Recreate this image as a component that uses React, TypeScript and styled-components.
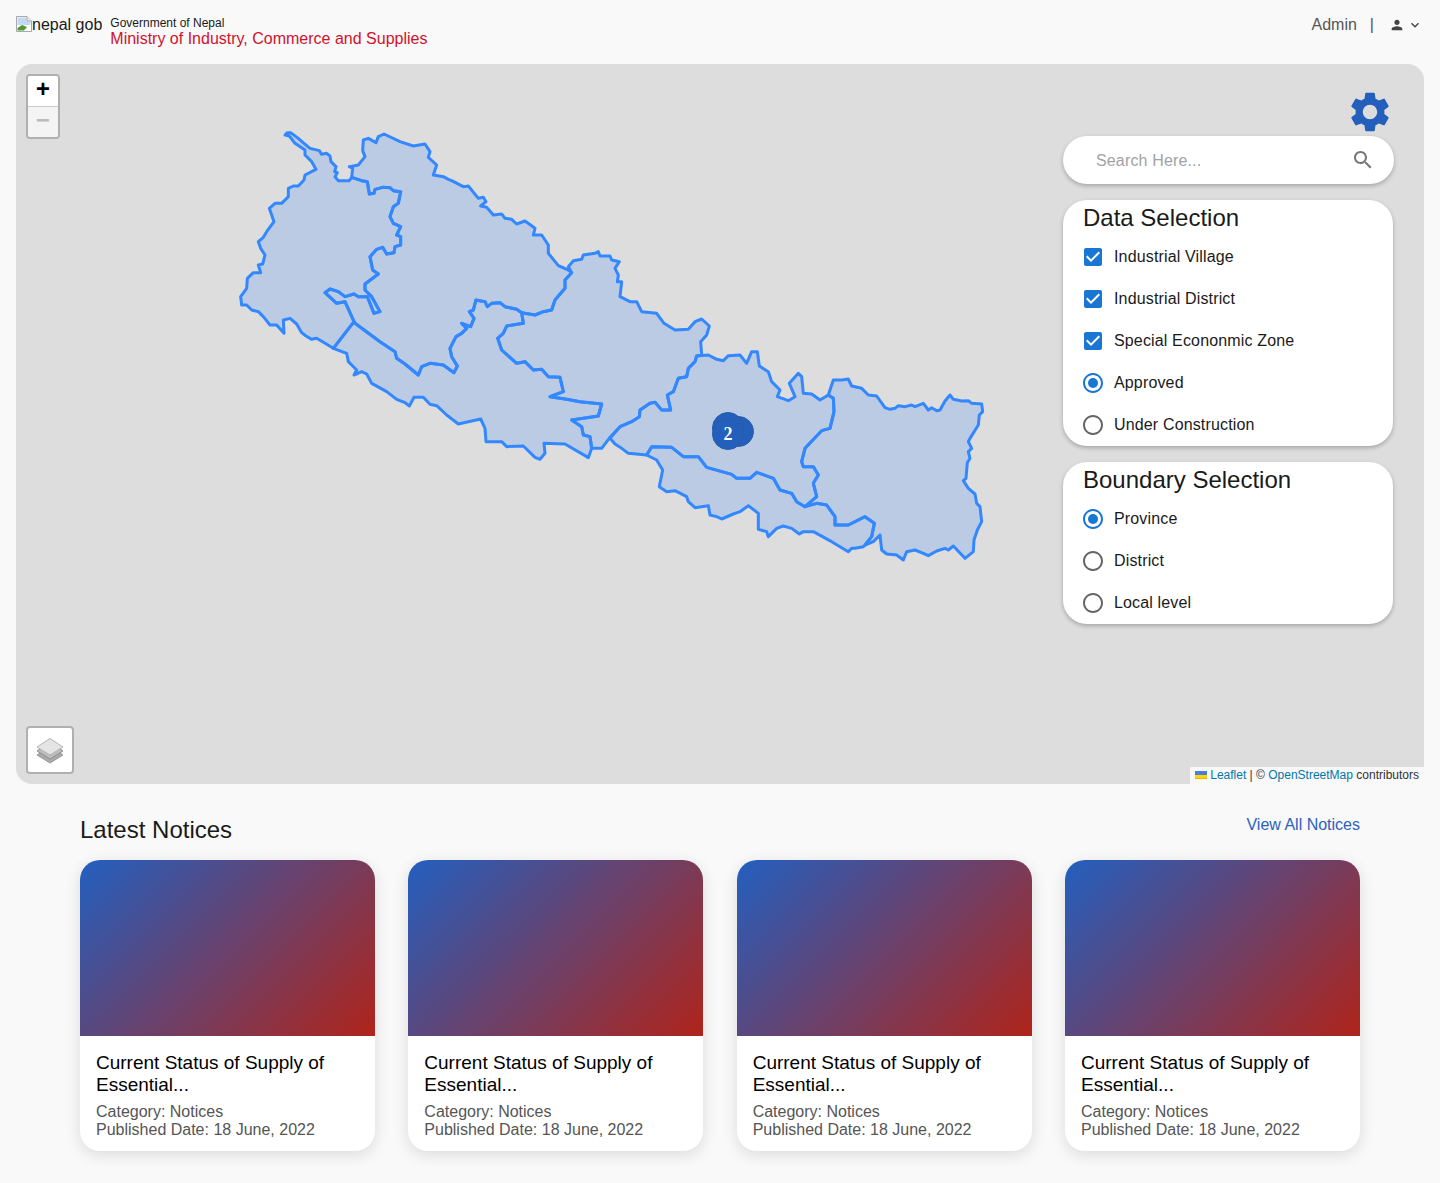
import styled, { createGlobalStyle } from "styled-components";

const GlobalStyle = createGlobalStyle`
  html, body {
    margin: 0;
    background-color: #f9f9f9;
    font-family: "Liberation Sans", Arial, sans-serif;
    color: #1a1a1a;
  }
  * { box-sizing: border-box; }
`;

const Header = styled.header`
  display: flex;
  justify-content: space-between;
  align-items: flex-start;
  height: 64px;
  padding: 16px 16px 0;
`;
const Brand = styled.div`
  display: flex;
  align-items: flex-start;
  gap: 8px;
`;
const BrokenImage = styled.span`
  display: flex;
  font-size: 16px;
  line-height: 18px;
  color: #1a1a1a;
`;
const BrandText = styled.div`
  display: flex;
  flex-direction: column;
`;
const GovText = styled.span`
  font-size: 12px;
  line-height: 14px;
`;
const MinistryText = styled.span`
  font-size: 16px;
  line-height: 18px;
  color: #d0112b;
`;
const UserBox = styled.div`
  display: flex;
  align-items: center;
  height: 18px;
  font-size: 16px;
  color: #555;
`;
const Divider = styled.span`
  margin: 0 15px 0 13px;
`;
const UserIcon = styled.svg`
  width: 16px;
  height: 16px;
  fill: #444;
`;
const ChevronIcon = styled(UserIcon)`
  margin: 0 1px 0 2px;
`;
const MapBox = styled.section`
  position: relative;
  height: 720px;
  margin: 0 16px;
  border-radius: 16px;
  background-color: #ddd;
  overflow: hidden;
`;
const MapShapes = styled.svg`
  position: absolute;
  left: 0;
  top: 0;
  width: 1408px;
  height: 720px;
`;
const Province = styled.polygon`
  fill: #3388ff;
  fill-opacity: 0.2;
  stroke: #3388ff;
  stroke-width: 9;
  stroke-linejoin: round;
`;
const Cluster = styled.div<{ $x: number; $y: number; $size: number }>`
  position: absolute;
  left: ${(p) => p.$x}px;
  top: ${(p) => p.$y}px;
  width: ${(p) => p.$size}px;
  height: ${(p) => p.$size}px;
  display: flex;
  align-items: center;
  justify-content: center;
  border-radius: 50%;
  background-color: #235fbb;
  border: 1px solid #2a5ca8;
  color: #fff;
  font-family: "Liberation Serif", serif;
  font-weight: bold;
  font-size: 18px;
`;
const ZoomControl = styled.div`
  position: absolute;
  left: 10px;
  top: 10px;
  display: flex;
  flex-direction: column;
  border: 2px solid rgba(0, 0, 0, 0.2);
  border-radius: 4px;
  background-clip: padding-box;
`;
const ZoomButton = styled.a<{ $disabled?: boolean }>`
  width: 30px;
  height: ${(p) => (p.$disabled ? "30px" : "31px")};
  padding-bottom: 2px;
  display: flex;
  align-items: center;
  justify-content: center;
  font-family: "Liberation Mono", monospace;
  font-weight: bold;
  font-size: 24px;
  color: ${(p) => (p.$disabled ? "#bbb" : "#000")};
  background-color: ${(p) => (p.$disabled ? "#f4f4f4" : "#fff")};
  border-bottom: ${(p) => (p.$disabled ? "none" : "1px solid #ccc")};
  border-radius: ${(p) => (p.$disabled ? "0 0 2px 2px" : "2px 2px 0 0")};
`;
const LayerControl = styled.div`
  position: absolute;
  left: 10px;
  bottom: 10px;
  width: 48px;
  height: 48px;
  display: flex;
  align-items: center;
  justify-content: center;
  background-color: #fff;
  border: 2px solid rgba(0, 0, 0, 0.2);
  border-radius: 4px;
  background-clip: padding-box;
`;
const Attribution = styled.div`
  position: absolute;
  right: 0;
  bottom: 0;
  display: flex;
  align-items: center;
  gap: 3px;
  height: 17px;
  padding: 0 5px 2px;
  font-size: 12px;
  color: #333;
  background-color: rgba(255, 255, 255, 0.8);
  white-space: pre;
`;
const AttrLink = styled.a`
  color: #0078a8;
`;
const Side = styled.div`
  position: absolute;
  top: 24px;
  right: 30px;
  width: 331px;
  display: flex;
  flex-direction: column;
`;
const GearRow = styled.div`
  display: flex;
  justify-content: flex-end;
  height: 48px;
`;
const SearchPill = styled.div`
  display: flex;
  align-items: center;
  height: 48px;
  padding: 0 19px 0 33px;
  margin-bottom: 16px;
  border-radius: 24px;
  background-color: #fff;
  box-shadow: 0 2px 4px rgba(0, 0, 0, 0.25);
`;
const SearchInput = styled.input`
  flex: 1;
  min-width: 0;
  border: none;
  outline: none;
  background: none;
  padding: 1px 0 0;
  font: 16px "Liberation Sans", Arial, sans-serif;
  letter-spacing: 0.15px;
  &::placeholder {
    color: #a2a2a2;
    opacity: 1;
  }
`;
const Panel = styled.div`
  display: flex;
  flex-direction: column;
  width: 330px;
  margin-bottom: 16px;
  border-radius: 24px;
  background-color: #fff;
  box-shadow: 0 2px 4px rgba(0, 0, 0, 0.25);
`;
const PanelTitle = styled.h2`
  margin: 0;
  padding-left: 20px;
  font-size: 24px;
  font-weight: 400;
  line-height: 36px;
  color: #1a1a1a;
`;
const OptionRow = styled.label`
  display: flex;
  align-items: center;
  height: 42px;
  font-size: 16px;
  letter-spacing: 0.15px;
`;
const OptionIcon = styled.span`
  width: 42px;
  height: 42px;
  margin-left: 9px;
  display: flex;
  align-items: center;
  justify-content: center;
`;
const Notices = styled.section`
  padding: 28px 80px 32px;
`;
const NoticeHead = styled.div`
  display: flex;
  justify-content: space-between;
  align-items: flex-start;
  margin-bottom: 12px;
`;
const NoticeTitle = styled.h2`
  margin: 0;
  font-size: 24px;
  font-weight: 400;
  line-height: 36px;
  color: #1a1a1a;
`;
const ViewAll = styled.a`
  padding-top: 1px;
  font-size: 16px;
  line-height: 24px;
  color: #2a62bf;
`;
const CardGrid = styled.div`
  display: grid;
  grid-template-columns: repeat(4, 295px);
  justify-content: space-between;
`;
const Card = styled.article`
  display: flex;
  flex-direction: column;
  height: 291px;
  border-radius: 20px;
  background-color: #fff;
  overflow: hidden;
  box-shadow: 0 4px 16px rgba(0, 0, 0, 0.12);
`;
const CardImage = styled.div`
  flex: none;
  height: 176px;
  background: linear-gradient(135deg, #235fbf, #b0241a);
`;
const CardBody = styled.div`
  padding: 16px 16px 0;
`;
const CardTitle = styled.h3`
  margin: 0 0 7px;
  font-size: 19px;
  font-weight: 400;
  line-height: 22px;
  color: #000;
`;
const CardMeta = styled.p`
  margin: 0;
  font-size: 16px;
  line-height: 18px;
  color: #555;
`;

const west = [
  "165,45 172,38 182,38 205,55 222,70 240,85 268,92 275,103 290,100 300,108 303,125 318,140 314,155 322,158 315,170 325,182 358,182 365,172 395,182 412,185 418,222 432,220 435,208 458,202 480,203 490,212 512,215 505,250 490,260 480,290 490,310 512,320 500,345 512,350 512,375 495,380 492,398 470,402 458,382 440,388 420,410 428,450 445,462 405,492 405,510 425,530 450,575 432,580 412,530 385,530 372,522 345,530 325,515 300,507 285,518 320,550 345,545 372,605 310,685 285,670 260,655 245,658 228,648 215,638 200,612 180,595 160,600 162,640 140,615 120,615 100,590 85,575 65,570 50,555 35,555 32,530 50,505 52,475 70,458 92,458 85,435 98,432 105,405 92,385 85,365 100,352 110,335 132,305 118,265 135,250 155,250 175,230 175,205 190,198 205,198 222,180 225,165 258,148 245,125 225,105 225,90 195,70 178,48",
  "365,172 368,145 358,140 385,135 405,110 398,92 400,60 415,55 438,68 445,50 462,42 510,65 550,78 585,72 600,95 595,112 620,135 610,165 640,170 655,178 665,182 700,200 715,198 745,235 760,232 768,245 752,258 770,262 790,285 815,282 825,295 845,298 860,312 885,303 915,325 910,345 935,345 955,375 955,400 985,437 1015,450 1025,458 1005,480 1005,505 975,540 965,570 940,575 915,585 875,578 860,568 825,560 810,548 785,550 772,560 765,545 738,540 730,570 718,575 732,595 722,620 695,610 710,625 695,640 678,650 660,685 665,710 682,738 672,758 640,735 600,730 575,740 565,765 525,732 500,715 495,695 450,665 375,610 372,605 345,545 320,550 285,518 300,507 325,515 345,530 372,522 385,530 412,530 432,580 450,575 425,530 405,510 405,492 445,462 428,450 420,410 440,388 458,382 470,402 492,398 495,380 512,375 512,350 500,345 512,320 490,310 480,290 490,260 505,250 512,215 490,212 480,203 458,202 435,208 432,220 418,222 412,185 395,182",
  "310,685 372,605 375,610 450,665 495,695 500,715 525,732 565,765 575,740 600,730 640,735 672,758 682,738 665,710 660,685 678,650 695,640 710,625 695,610 722,620 732,595 718,575 730,570 738,540 765,545 772,560 785,550 810,548 825,560 860,568 875,578 880,610 830,618 820,640 803,655 815,690 860,730 885,725 910,750 935,748 955,770 990,772 1000,815 960,830 1010,838 1050,845 1115,852 1105,888 1025,900 1055,920 1060,945 1080,950 1085,985 1075,1013 1005,972 942,970 945,1000 930,1018 915,1012 880,978 830,980 815,965 768,965 765,925 752,897 685,912 650,885 620,857 600,853 580,832 552,832 538,858 525,848 500,838 470,815 425,790 410,762 395,755 372,765 380,750 355,725 350,700",
  "875,578 915,585 940,575 965,570 975,540 1005,505 1005,480 1025,458 1015,440 1030,422 1055,418 1060,405 1095,400 1105,395 1110,408 1140,408 1145,420 1168,425 1155,445 1165,465 1162,485 1175,485 1170,530 1200,545 1220,545 1235,575 1280,580 1302,610 1335,630 1375,628 1395,605 1415,597 1438,618 1430,645 1412,665 1415,705 1400,708 1395,725 1375,745 1370,770 1345,775 1330,815 1312,825 1322,870 1295,870 1275,847 1260,850 1230,870 1228,890 1205,905 1170,920 1140,952 1115,985 1085,985 1080,950 1060,945 1055,920 1025,900 1105,888 1115,852 1050,845 1010,838 960,830 1000,815 990,772 955,770 935,748 910,750 885,725 860,730 815,690 803,655 820,640 830,618 880,610",
];

const east = [
  "210,595 240,560 275,545 298,530 300,510 330,490 345,487 365,510 392,510 382,465 400,455 415,415 440,410 445,385 465,365 470,348 505,345 530,358 550,362 565,347 600,345 620,370 635,335 652,335 658,378 685,395 695,425 720,450 712,470 745,482 765,470 748,430 775,400 785,410 790,460 815,462 840,480 865,465 880,475 882,515 870,565 845,572 795,625 785,665 790,680 820,680 835,705 820,730 830,770 795,800 770,785 755,760 720,750 700,715 650,697 630,715 590,715 575,703 500,682 475,650 430,650 395,622 335,620 320,645 265,640 245,625 225,612",
  "320,645 335,620 395,622 430,650 475,650 500,682 575,703 590,715 630,715 650,697 700,715 720,750 755,760 770,785 795,800 830,790 860,795 885,830 885,855 925,855 975,830 1003,850 995,890 975,915 970,920 945,925 935,925 925,935 875,905 820,875 790,875 778,882 755,865 730,858 710,865 685,890 680,875 655,868 655,820 625,797 600,815 580,822 545,837 530,830 510,825 505,797 465,803 445,785 440,770 405,752 380,755 358,740 368,690 350,660",
  "880,475 865,465 880,420 905,420 925,417 935,438 965,445 985,465 1010,468 1035,503 1050,508 1065,505 1075,497 1095,500 1115,495 1125,500 1150,490 1165,510 1175,503 1190,512 1200,510 1215,483 1230,465 1240,478 1265,483 1285,482 1295,490 1325,492 1328,515 1318,525 1315,555 1290,595 1285,605 1295,625 1285,635 1290,655 1282,668 1278,715 1270,722 1285,745 1305,762 1310,790 1320,800 1325,845 1312,870 1302,900 1300,935 1275,955 1240,918 1225,930 1215,925 1190,933 1165,947 1150,940 1125,930 1100,935 1090,960 1070,945 1040,942 1025,930 1020,885 1000,905 975,915 995,890 1003,850 975,830 925,855 885,855 885,830 860,795 830,790 795,800 830,770 820,730 835,705 820,680 790,680 785,665 795,625 845,572 870,565 882,515",
];

const checkPath =
  "M19 3H5c-1.11 0-2 .9-2 2v14c0 1.1.89 2 2 2h14c1.11 0 2-.9 2-2V5c0-1.1-.89-2-2-2zm-9 14l-5-5 1.41-1.41L10 14.17l7.59-7.59L19 8l-9 9z";
const ringPath =
  "M12 2C6.48 2 2 6.48 2 12s4.48 10 10 10 10-4.48 10-10S17.52 2 12 2zm0 18c-4.42 0-8-3.58-8-8s3.58-8 8-8 8 3.58 8 8-3.58 8-8 8z";

const Check = () => (
  <OptionIcon>
    <svg width="24" height="24" viewBox="0 0 24 24" fill="#1976d2">
      <path d={checkPath} />
    </svg>
  </OptionIcon>
);

const Radio = ({ on }: { on?: boolean }) => (
  <OptionIcon>
    <svg width="24" height="24" viewBox="0 0 24 24" fill={on ? "#1976d2" : "#666"}>
      <path d={ringPath} />
      {on && <circle cx="12" cy="12" r="5" />}
    </svg>
  </OptionIcon>
);

const App = () => {
  return (
    <>
      <GlobalStyle />
      <Header>
        <Brand>
          <BrokenImage>
            <svg width="16" height="16" viewBox="0 0 16 16">
              <path d="M0.5 0.5H11L15.5 5V15.5H0.5Z" fill="#fff" stroke="#a8a8a8" />
              <path d="M1.5 1.5H10.5V5.5H14.5V9L1.5 9Z" fill="#c5d7f3" />
              <path d="M1.5 14.5V12L6 9L11 11L8 14.5Z" fill="#4f9a34" />
              <path d="M11 0.5V5H15.5" fill="#eee" stroke="#a8a8a8" />
            </svg>
            nepal gob
          </BrokenImage>
          <BrandText>
            <GovText>Government of Nepal</GovText>
            <MinistryText>Ministry of Industry, Commerce and Supplies</MinistryText>
          </BrandText>
        </Brand>
        <UserBox>
          Admin
          <Divider>|</Divider>
          <UserIcon viewBox="0 0 24 24">
            <path d="M12 12c2.21 0 4-1.79 4-4s-1.79-4-4-4-4 1.79-4 4 1.79 4 4 4zm0 2c-2.67 0-8 1.34-8 4v2h16v-2c0-2.66-5.33-4-8-4z" />
          </UserIcon>
          <ChevronIcon viewBox="0 0 24 24">
            <path d="M16.59 8.59 12 13.17 7.41 8.59 6 10l6 6 6-6z" />
          </ChevronIcon>
        </UserBox>
      </Header>

      <MapBox>
        <MapShapes viewBox="-642 -168 4224 2160">
          {west.map((pts) => (
            <Province key={pts.slice(0, 12)} points={pts} />
          ))}
          <g transform="translate(930 360)">
            {east.map((pts) => (
              <Province key={pts.slice(0, 12)} points={pts} />
            ))}
          </g>
        </MapShapes>
        <Cluster $x={707} $y={352} $size={31} />
        <Cluster $x={696} $y={348} $size={32} />
        <Cluster $x={696} $y={354} $size={32}>2</Cluster>

        <ZoomControl>
          <ZoomButton>+</ZoomButton>
          <ZoomButton $disabled>−</ZoomButton>
        </ZoomControl>

        <LayerControl>
          <svg width="28" height="27" viewBox="0 0 28 27">
            <path d="M14 9.5L27 18L14 26L1 18Z" fill="#aaa" stroke="#999" />
            <path d="M14 5.5L27 14L14 22L1 14Z" fill="#bdbdbd" stroke="#8f8f8f" />
            <path d="M14 1.5L27 10L14 18L1 10Z" fill="#e4e4e4" stroke="#b5b5b5" />
          </svg>
        </LayerControl>

        <Attribution>
          <svg width="12" height="8" viewBox="0 0 12 8">
            <path fill="#4C7BE1" d="M0 0h12v4H0z" />
            <path fill="#FFD500" d="M0 4h12v3H0z" />
            <path fill="#E0BC00" d="M0 7h12v1H0z" />
          </svg>
          <span>
            <AttrLink>Leaflet</AttrLink> | © <AttrLink>OpenStreetMap</AttrLink> contributors
          </span>
        </Attribution>

        <Side>
          <GearRow>
            <svg width="48" height="48" viewBox="0 0 24 24" fill="#235fbb">
              <path d="M19.14 12.94c.04-.3.06-.61.06-.94 0-.32-.02-.64-.07-.94l2.03-1.58c.18-.14.23-.41.12-.61l-1.92-3.32c-.12-.22-.37-.29-.59-.22l-2.39.96c-.5-.38-1.03-.7-1.62-.94l-.36-2.54c-.04-.24-.24-.41-.48-.41h-3.84c-.24 0-.43.17-.47.41l-.36 2.54c-.59.24-1.13.57-1.62.94l-2.39-.96c-.22-.08-.47 0-.59.22L2.74 8.87c-.12.21-.08.47.12.61l2.03 1.58c-.05.3-.09.63-.09.94s.02.64.07.94l-2.03 1.58c-.18.14-.23.41-.12.61l1.92 3.32c.12.22.37.29.59.22l2.39-.96c.5.38 1.03.7 1.62.94l.36 2.54c.05.24.24.41.48.41h3.84c.24 0 .44-.17.47-.41l.36-2.54c.59-.24 1.13-.56 1.62-.94l2.39.96c.22.08.47 0 .59-.22l1.92-3.32c.12-.22.07-.47-.12-.61l-2.01-1.58zM12 15.6c-1.98 0-3.6-1.62-3.6-3.6s1.62-3.6 3.6-3.6 3.6 1.62 3.6 3.6-1.62 3.6-3.6 3.6z" />
            </svg>
          </GearRow>
          <SearchPill>
            <SearchInput placeholder="Search Here..." />
            <svg width="24" height="24" viewBox="0 0 24 24" fill="#777">
              <path d="M15.5 14h-.79l-.28-.27C15.41 12.59 16 11.11 16 9.5 16 5.91 13.09 3 9.5 3S3 5.91 3 9.5 5.91 16 9.5 16c1.61 0 3.09-.59 4.23-1.57l.27.28v.79l5 4.99L20.49 19l-4.99-5zm-6 0C7.01 14 5 11.99 5 9.5S7.01 5 9.5 5 14 7.01 14 9.5 11.99 14 9.5 14z" />
            </svg>
          </SearchPill>
          <Panel>
            <PanelTitle>Data Selection</PanelTitle>
            <OptionRow><Check />Industrial Village</OptionRow>
            <OptionRow><Check />Industrial District</OptionRow>
            <OptionRow><Check />Special Econonmic Zone</OptionRow>
            <OptionRow><Radio on />Approved</OptionRow>
            <OptionRow><Radio />Under Construction</OptionRow>
          </Panel>
          <Panel>
            <PanelTitle>Boundary Selection</PanelTitle>
            <OptionRow><Radio on />Province</OptionRow>
            <OptionRow><Radio />District</OptionRow>
            <OptionRow><Radio />Local level</OptionRow>
          </Panel>
        </Side>
      </MapBox>

      <Notices>
        <NoticeHead>
          <NoticeTitle>Latest Notices</NoticeTitle>
          <ViewAll>View All Notices</ViewAll>
        </NoticeHead>
        <CardGrid>
          {[1, 2, 3, 4].map((n) => (
            <Card key={n}>
              <CardImage />
              <CardBody>
                <CardTitle>Current Status of Supply of Essential...</CardTitle>
                <CardMeta>Category: Notices</CardMeta>
                <CardMeta>Published Date: 18 June, 2022</CardMeta>
              </CardBody>
            </Card>
          ))}
        </CardGrid>
      </Notices>
    </>
  );
};

export default App;
